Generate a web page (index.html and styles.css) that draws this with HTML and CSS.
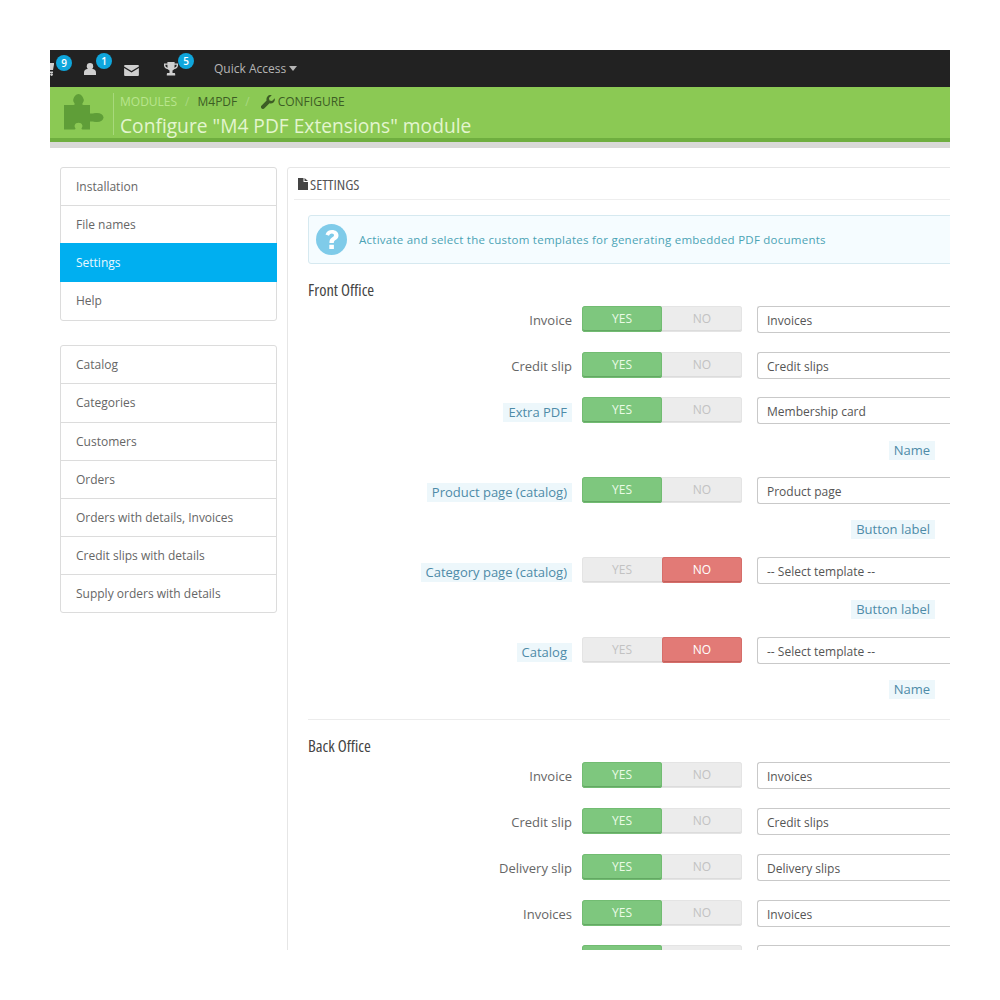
FILE: index.html
```html
<!DOCTYPE html>
<html lang="en">
<head>
<meta charset="utf-8">
<title>Configure M4 PDF Extensions module</title>
<link rel="stylesheet" href="styles.css">
</head>
<body>
<div class="stage">
  <header class="topbar">
    <div class="nav-item nav-cart">
      <svg class="ico" width="14" height="14" viewBox="0 0 14 14"><path d="M0 1h11v1.600l-1 5.400H1.500v1.400H10V11H0z" fill="#cfcfcf"/><circle cx="2" cy="12.600" r="1.300" fill="#cfcfcf"/><circle cx="8.600" cy="12.600" r="1.300" fill="#cfcfcf"/></svg>
      <span class="badge">9</span>
    </div>
    <div class="nav-item nav-user">
      <svg class="ico" width="14" height="14" viewBox="0 0 14 14"><circle cx="7" cy="4.200" r="3.200" fill="#cfcfcf"/><path d="M1 13v-2.600C1 8.400 2.600 7 4.400 7h5.200C11.400 7 13 8.400 13 10.400V13z" fill="#cfcfcf"/></svg>
      <span class="badge">1</span>
    </div>
    <div class="nav-item nav-mail">
      <svg class="ico" width="15" height="12" viewBox="0 0 16 13"><path d="M1 1h14c.6 0 1 .4 1 1v.6L8 7.600 0 2.600V2c0-.6.4-1 1-1z" fill="#cfcfcf"/><path d="M0 4.200l8 5 8-5V12c0 .6-.4 1-1 1H1c-.6 0-1-.4-1-1z" fill="#cfcfcf"/></svg>
    </div>
    <div class="nav-item nav-trophy">
      <svg class="ico" width="14" height="14" viewBox="0 0 14 14"><path d="M3.400 0h7.200v1.400H14v2.200c0 2-1.600 3.200-3.900 3.600-.5.7-1 1.100-1.600 1.400V11h1.600c.7 0 1.100.5 1.100 1.100V13.400H2.800v-1.300c0-.6.4-1.100 1.100-1.100h1.600V8.600c-.6-.3-1.100-.7-1.600-1.400C1.600 6.800 0 5.600 0 3.600V1.400h3.400zM1.400 2.800v.8c0 1 .8 1.800 2.200 2.200-.1-.9-.2-1.900-.2-3zm11.200 0h-2c0 1.100-.1 2.100-.2 3 1.400-.4 2.200-1.200 2.200-2.200z" fill="#cfcfcf" fill-rule="evenodd"/></svg>
      <span class="badge">5</span>
    </div>
    <div class="quick">Quick Access<span class="caret"></span></div>
  </header>

  <section class="pagehead">
    <svg class="puzzle" width="41" height="37" viewBox="0 0 41 37"><path d="M0 12h9.500c1.300 0 1.500-1 .8-2C9.400 8.800 9 7.700 9.300 6.300 9.900 4 12 1 14.500 1S19 4 19.700 6.300c.3 1.400-.1 2.500-1 3.700-.7 1-.5 2 .8 2H26V36.500H18.500c-1 0-1.200-.8-.8-1.500.7-1.200.9-2.100.5-3.100-.5-1.300-1.900-2.100-3.700-2.100s-3.200.8-3.700 2.100c-.4 1 -.2 1.900.5 3.100.4.700.2 1.500-.8 1.500H0z" fill="#5f9e38"/><rect x="25" y="20.500" width="8" height="8" fill="#5f9e38"/><ellipse cx="33" cy="24.500" rx="6.500" ry="4.500" fill="#5f9e38"/></svg>
    <div class="headtext">
      <div class="crumbs">
        <span class="crumb-light">MODULES</span><span class="sep">/</span><span class="crumb-dark">M4PDF</span><span class="sep">/</span>
        <svg class="wrench" width="14" height="14" viewBox="0 0 14 14"><path d="M13.800 3.300c.3 1.600-.2 3.100-1.300 4.100-1.100 1-2.600 1.300-4 .9L3.200 13.500c-.7.700-1.800.7-2.500 0l-.3-.3c-.7-.7-.7-1.800 0-2.500l5.200-5.200C5.200 4 5.500 2.500 6.500 1.400 7.500.3 9.100-.2 10.700.2L7.900 3l.6 2.500 2.500.6z" fill="#3d5d25"/></svg>
        <span class="crumb-dark">CONFIGURE</span>
      </div>
      <h1 class="title">Configure "M4 PDF Extensions" module</h1>
    </div>
  </section>

  <div class="content">
    <aside class="sidebar">
      <ul class="menu">
        <li>Installation</li>
        <li>File names</li>
        <li class="active">Settings</li>
        <li>Help</li>
      </ul>
      <ul class="menu">
        <li>Catalog</li>
        <li class="wide">Categories</li>
        <li>Customers</li>
        <li>Orders</li>
        <li>Orders with details, Invoices</li>
        <li>Credit slips with details</li>
        <li>Supply orders with details</li>
      </ul>
    </aside>

    <main class="panel">
      <div class="panel-head">
        <svg class="fileico" width="10" height="12" viewBox="0 0 10 12"><path d="M0 0h5.500v4H10v8H0zM6.500 0L10 3H6.500z" fill="#444"/></svg>
        <span class="cond">SETTINGS</span>
      </div>
      <div class="info">
        <svg class="info-ico" width="31" height="31" viewBox="0 0 31 31"><circle cx="15.500" cy="15.500" r="15.500" fill="#7fcbe9"/><path d="M9.500 10.500C10.500 7.300 13 6 16 6c3.700 0 6.500 2.200 6.500 5.400 0 2.400-1.300 3.600-3 4.700-1.200.8-1.700 1.300-1.700 2.900h-4.400c0-3 .8-4.200 2.600-5.400 1.200-.8 2-1.300 2-2.300 0-1.100-.9-1.800-2.100-1.800-1.300 0-2.200.7-2.900 2.300zM13.300 20.700h4.600v4.300h-4.600z" fill="#fff"/></svg>
        <span>Activate and select the custom templates for generating embedded PDF documents</span>
      </div>

      <h3 class="section section-front"><span class="cond">Front Office</span></h3>

      <div class="row"><div class="label">Invoice</div><div class="sw on"><span>YES</span><span>NO</span></div><div class="sel">Invoices</div></div>
      <div class="row tight"><div class="label">Credit slip</div><div class="sw on"><span>YES</span><span>NO</span></div><div class="sel">Credit slips</div></div>
      <div class="row hinted"><div class="label"><span class="tip">Extra PDF</span></div><div class="sw on"><span>YES</span><span>NO</span></div><div class="sel">Membership card</div></div>
      <div class="hint hint-low"><span>Name</span></div>
      <div class="row hinted"><div class="label"><span class="tip">Product page (catalog)</span></div><div class="sw on"><span>YES</span><span>NO</span></div><div class="sel">Product page</div></div>
      <div class="hint"><span>Button label</span></div>
      <div class="row hinted"><div class="label"><span class="tip">Category page (catalog)</span></div><div class="sw off"><span>YES</span><span>NO</span></div><div class="sel">-- Select template --</div></div>
      <div class="hint"><span>Button label</span></div>
      <div class="row hinted"><div class="label"><span class="tip">Catalog</span></div><div class="sw off"><span>YES</span><span>NO</span></div><div class="sel">-- Select template --</div></div>
      <div class="hint"><span>Name</span></div>

      <hr class="divider">

      <h3 class="section"><span class="cond">Back Office</span></h3>

      <div class="row"><div class="label">Invoice</div><div class="sw on"><span>YES</span><span>NO</span></div><div class="sel">Invoices</div></div>
      <div class="row"><div class="label">Credit slip</div><div class="sw on"><span>YES</span><span>NO</span></div><div class="sel">Credit slips</div></div>
      <div class="row"><div class="label">Delivery slip</div><div class="sw on"><span>YES</span><span>NO</span></div><div class="sel">Delivery slips</div></div>
      <div class="row tight"><div class="label">Invoices</div><div class="sw on"><span>YES</span><span>NO</span></div><div class="sel">Invoices</div></div>
      <div class="row"><div class="label"></div><div class="sw on"><span></span><span></span></div><div class="sel"></div></div>
    </main>
  </div>
</div>
</body>
</html>
```

FILE: styles.css
```css
* { box-sizing: border-box; }
html, body { margin: 0; background: #fff; }
body { font-family: "Open Sans", sans-serif; font-size: 12px; color: #555; padding: 50px; }

.stage { width: 900px; height: 900px; overflow: hidden; display: flex; flex-direction: column; background: #fff; }

.topbar { height: 37px; flex: none; background: #222; display: flex; align-items: center; color: #bdbdbd; }
.nav-item { position: relative; flex: none; display: flex; align-items: center; }
.nav-cart { margin-left: -7px; width: 14px; }
.nav-user { margin-left: 26px; width: 14px; }
.nav-mail { margin-left: 27px; width: 15px; margin-top: 2px; }
.nav-trophy { margin-left: 25px; width: 14px; }
.ico { display: block; }
.badge { position: absolute; left: 13px; top: -7px; width: 16px; height: 16px; border-radius: 50%; background: #0fa6dc; color: #fff; font-size: 10px; font-weight: 600; line-height: 16px; text-align: center; }
.nav-trophy .badge { left: 14px; top: -9px; }
.nav-user .badge { top: -9px; }
.quick { margin-left: 36px; font-size: 12px; display: flex; align-items: center; color: #b5b5b5; }
.caret { margin-left: 3px; border-left: 4.500px solid transparent; border-right: 4.500px solid transparent; border-top: 5px solid #b5b5b5; }

.pagehead { height: 55px; flex: none; background: #8bc954; border-bottom: 4px solid #6fae3f; display: flex; position: relative; padding: 6px 0 0 14px; }
.pagehead::after { content: ""; position: absolute; left: 0; right: 0; bottom: -10px; height: 6px; background: #d9d9d7; }
.puzzle { flex: none; }
.headtext { margin-left: 8px; border-left: 1px solid #a8d97c; padding-left: 6px; padding-top: 1px; height: 42px; }
.crumbs { display: flex; align-items: center; font-size: 12px; line-height: 16px; }
.crumb-light { color: #b9e58d; }
.crumb-dark { color: #3d5d25; }
.sep { color: #a9d881; margin: 0 8px; }
.wrench { margin: 0 3px 0 3px; }
.title { margin: 2px 0 0; font-size: 19.200px; line-height: 27px; font-weight: 400; color: #e3f5cf; white-space: nowrap; }

.content { flex: 1; min-height: 0; display: flex; align-items: flex-start; padding: 25px 0 0 10px; }
.sidebar { width: 217px; flex: none; }
.menu { list-style: none; margin: 0 0 24px; padding: 0; border: 1px solid #dcdcdc; border-radius: 3px; background: #fff; }
.menu li { height: 38px; line-height: 37px; padding-left: 15px; border-bottom: 1px solid #dcdcdc; font-size: 12px; color: #666; white-space: nowrap; }
.menu li:last-child { border-bottom: 0; height: 37px; }
.menu li.wide { height: 39px; }
.menu li.active { background: #00aff0; color: #e8f8ff; margin: -1px -1px 0; padding-left: 16px; height: 39px; line-height: 39px; border-bottom: 0; }
.menu li.active + li { height: 38px; line-height: 38px; }

.panel { margin-left: 10px; width: 720px; flex: none; height: 800px; border: 1px solid #e6e6e6; border-radius: 3px 0 0 0; padding: 0 0 0 20px; }
.panel-head { height: 32px; margin-left: -14px; border-bottom: 1px solid #eeeeee; display: flex; align-items: center; gap: 2px; padding-left: 4px; font-size: 15px; color: #555; }
.fileico { flex: none; }
.cond { font-family: "Open Sans", sans-serif; font-stretch: 75%; white-space: nowrap; }
.info { margin-top: 15px; height: 49px; background: #f5fcff; border: 1px solid #d6e9f0; border-radius: 3px 0 0 3px; display: flex; align-items: center; padding-left: 7px; gap: 12px; font-size: 11.500px; letter-spacing: .25px; color: #4ba3b5; white-space: nowrap; }
.info-ico { flex: none; }

.section { margin: 0 0 6px; height: 20px; line-height: 20px; font-size: 16.500px; font-weight: 400; color: #444; }
.section-front { margin-top: 16px; }
.divider { margin: 2px 0 16px; border: 0; border-top: 1px solid #ececec; }

.row { display: flex; align-items: flex-start; height: 26px; margin-bottom: 20px; }
.row.tight { margin-bottom: 19px; }
.row.hinted { margin-bottom: 0; }
.label { width: 264px; flex: none; margin-right: 10px; margin-top: 1px; text-align: right; white-space: nowrap; font-size: 13px; line-height: 26px; color: #666; }
.tip { display: inline-block; color: #4e8ba8; background: #edf7fb; padding: 0 5px; line-height: 19px; margin-top: 5px; vertical-align: top; }
.sw { width: 160px; height: 26px; flex: none; display: flex; border-radius: 3px; background: #ececec; box-shadow: inset 0 0 0 1px #e4e4e4, inset 0 -2px 0 #dcdcdc; overflow: hidden; font-size: 12px; line-height: 25px; text-align: center; color: #c2c2c2; }
.sw span { flex: 1; }
.sw.on span:first-child { background: #7ec77e; color: #eafbe6; box-shadow: inset 0 0 0 1px #72bc72, inset 0 -2px 0 #63a863; border-radius: 3px; }
.sw.off span:last-child { background: #e27a76; color: #fff; box-shadow: inset 0 0 0 1px #d66e6a, inset 0 -2px 0 #c45f5b; border-radius: 3px; }
.sel { margin-left: 15px; width: 240px; height: 27px; flex: none; border: 1px solid #c9c9c9; border-right: 0; border-radius: 3px 0 0 3px; padding-left: 9px; line-height: 27px; font-size: 12px; color: #555; white-space: nowrap; }

.hint { height: 54px; width: 627px; padding-top: 17px; text-align: right; font-size: 13px; line-height: 19px; color: #4e8ba8; }
.hint-low { padding-top: 18px; }
.hint span { display: inline-block; padding: 0 5px; background: #edf7fb; }
```
